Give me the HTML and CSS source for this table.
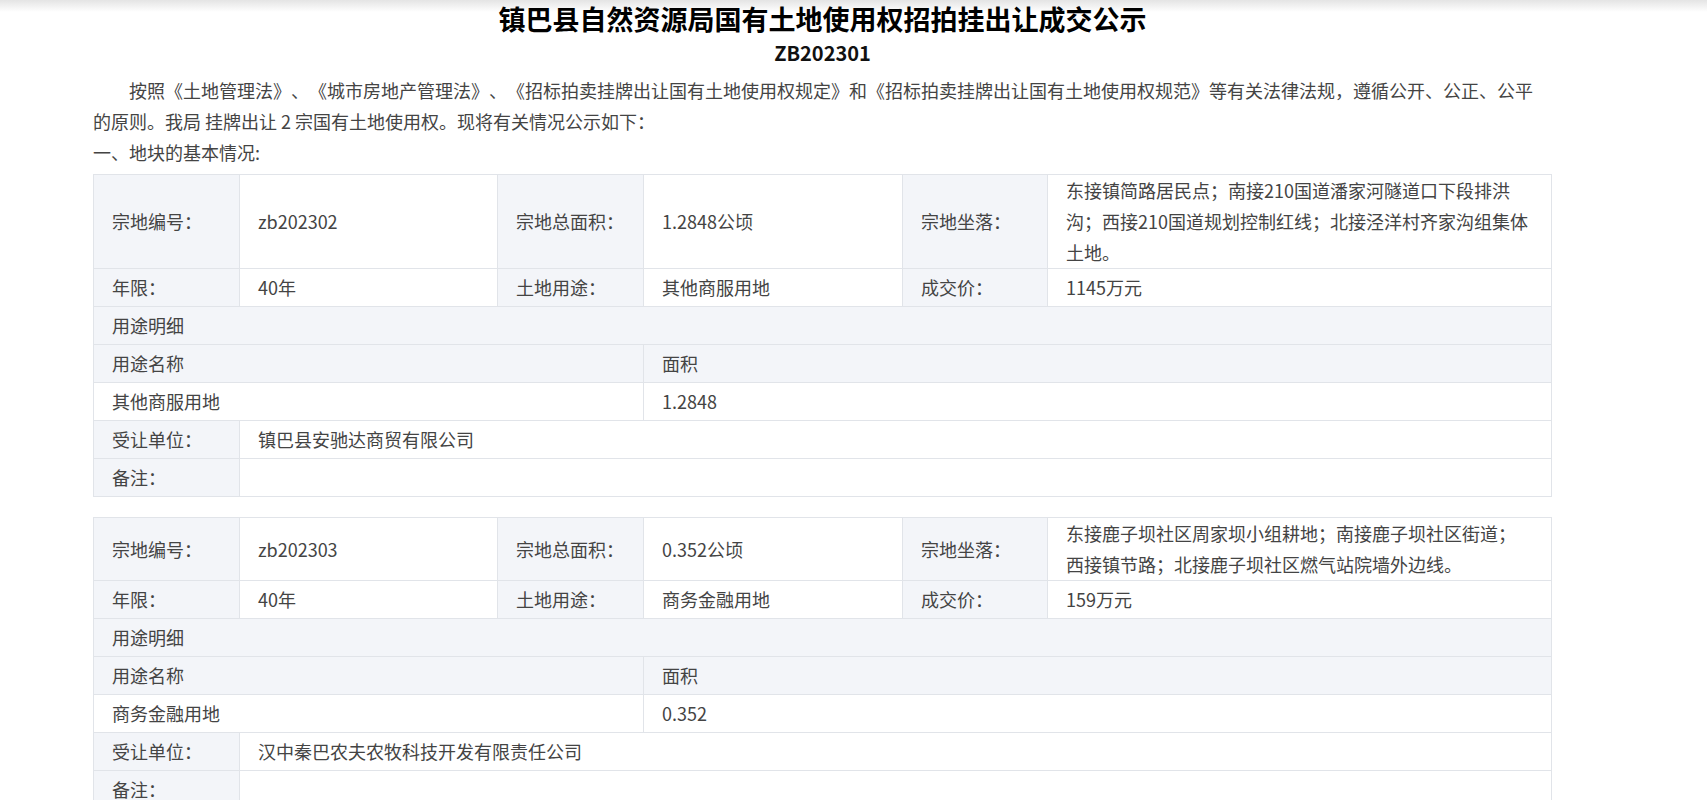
FILE: index.html
```html
<!DOCTYPE html>
<html lang="zh-CN">
<head>
  <meta charset="UTF-8">
  <title>镇巴县自然资源局国有土地使用权招拍挂出让成交公示</title>
  <link rel="stylesheet" href="styles.css">
</head>
<body>
  <div class="page">
    <h1 class="title">镇巴县自然资源局国有土地使用权招拍挂出让成交公示</h1>
    <div class="subtitle">ZB202301</div>
    <p class="intro">按照《土地管理法》、《城市房地产管理法》、《招标拍卖挂牌出让国有土地使用权规定》和《招标拍卖挂牌出让国有土地使用权规范》等有关法律法规，遵循公开、公正、公平的原则。我局 挂牌出让 2 宗国有土地使用权。现将有关情况公示如下：</p>
    <p class="section">一、地块的基本情况:</p>

    <table class="parcel">
      <colgroup>
        <col class="c-lbl"><col class="c-val"><col class="c-lbl"><col class="c-val2"><col class="c-lbl2"><col class="c-wide">
      </colgroup>
      <tr>
        <td class="lbl">宗地编号：</td>
        <td>zb202302</td>
        <td class="lbl">宗地总面积：</td>
        <td>1.2848公顷</td>
        <td class="lbl">宗地坐落：</td>
        <td>东接镇简路居民点；南接210国道潘家河隧道口下段排洪沟；西接210国道规划控制红线；北接泾洋村齐家沟组集体土地。</td>
      </tr>
      <tr>
        <td class="lbl">年限：</td>
        <td>40年</td>
        <td class="lbl">土地用途：</td>
        <td>其他商服用地</td>
        <td class="lbl">成交价：</td>
        <td>1145万元</td>
      </tr>
      <tr class="band">
        <td colspan="6">用途明细</td>
      </tr>
      <tr class="band">
        <td colspan="3">用途名称</td>
        <td colspan="3">面积</td>
      </tr>
      <tr>
        <td colspan="3">其他商服用地</td>
        <td colspan="3">1.2848</td>
      </tr>
      <tr>
        <td class="lbl">受让单位：</td>
        <td colspan="5">镇巴县安驰达商贸有限公司</td>
      </tr>
      <tr>
        <td class="lbl">备注：</td>
        <td colspan="5"></td>
      </tr>
    </table>

    <table class="parcel">
      <colgroup>
        <col class="c-lbl"><col class="c-val"><col class="c-lbl"><col class="c-val2"><col class="c-lbl2"><col class="c-wide">
      </colgroup>
      <tr>
        <td class="lbl">宗地编号：</td>
        <td>zb202303</td>
        <td class="lbl">宗地总面积：</td>
        <td>0.352公顷</td>
        <td class="lbl">宗地坐落：</td>
        <td>东接鹿子坝社区周家坝小组耕地；南接鹿子坝社区街道；西接镇节路；北接鹿子坝社区燃气站院墙外边线。</td>
      </tr>
      <tr>
        <td class="lbl">年限：</td>
        <td>40年</td>
        <td class="lbl">土地用途：</td>
        <td>商务金融用地</td>
        <td class="lbl">成交价：</td>
        <td>159万元</td>
      </tr>
      <tr class="band">
        <td colspan="6">用途明细</td>
      </tr>
      <tr class="band">
        <td colspan="3">用途名称</td>
        <td colspan="3">面积</td>
      </tr>
      <tr>
        <td colspan="3">商务金融用地</td>
        <td colspan="3">0.352</td>
      </tr>
      <tr>
        <td class="lbl">受让单位：</td>
        <td colspan="5">汉中秦巴农夫农牧科技开发有限责任公司</td>
      </tr>
      <tr>
        <td class="lbl">备注：</td>
        <td colspan="5"></td>
      </tr>
    </table>
  </div>
</body>
</html>
```

FILE: styles.css
```css
body {
  margin: 0;
  font-family: "Noto Sans CJK SC", "Microsoft YaHei", sans-serif;
  color: #444;
  background: #fff linear-gradient(#e4e4e4, #fff 12px) no-repeat;
  text-spacing-trim: space-all;
}
.page {
  width: 1459px;
  margin-left: 93px;
}
.title {
  margin: 0;
  font-size: 27px;
  line-height: 37px;
  text-align: center;
  color: #000;
}
.subtitle {
  font-size: 20px;
  font-weight: bold;
  line-height: 32px;
  text-align: center;
  color: #111;
}
.intro {
  margin: 6px 9px 0 0;
  text-indent: 2em;
  font-size: 18px;
  line-height: 31px;
}
.section {
  margin: 0;
  font-size: 18px;
  line-height: 31px;
}
.parcel {
  width: 100%;
  border-collapse: collapse;
  table-layout: fixed;
  margin: 6px 0 20px;
  font-size: 18px;
}
.c-lbl { width: 146px; }
.c-val { width: 258px; }
.c-val2 { width: 259px; }
.c-lbl2 { width: 145px; }
.parcel td {
  border: 1px solid #e1e4e9;
  height: 37px;
  line-height: 31px;
  padding: 0 22px 0 18px;
  vertical-align: middle;
}
.parcel .lbl {
  padding-right: 6px;
}
.parcel .lbl,
.parcel .band td {
  background: #f3f5f9;
}
```
